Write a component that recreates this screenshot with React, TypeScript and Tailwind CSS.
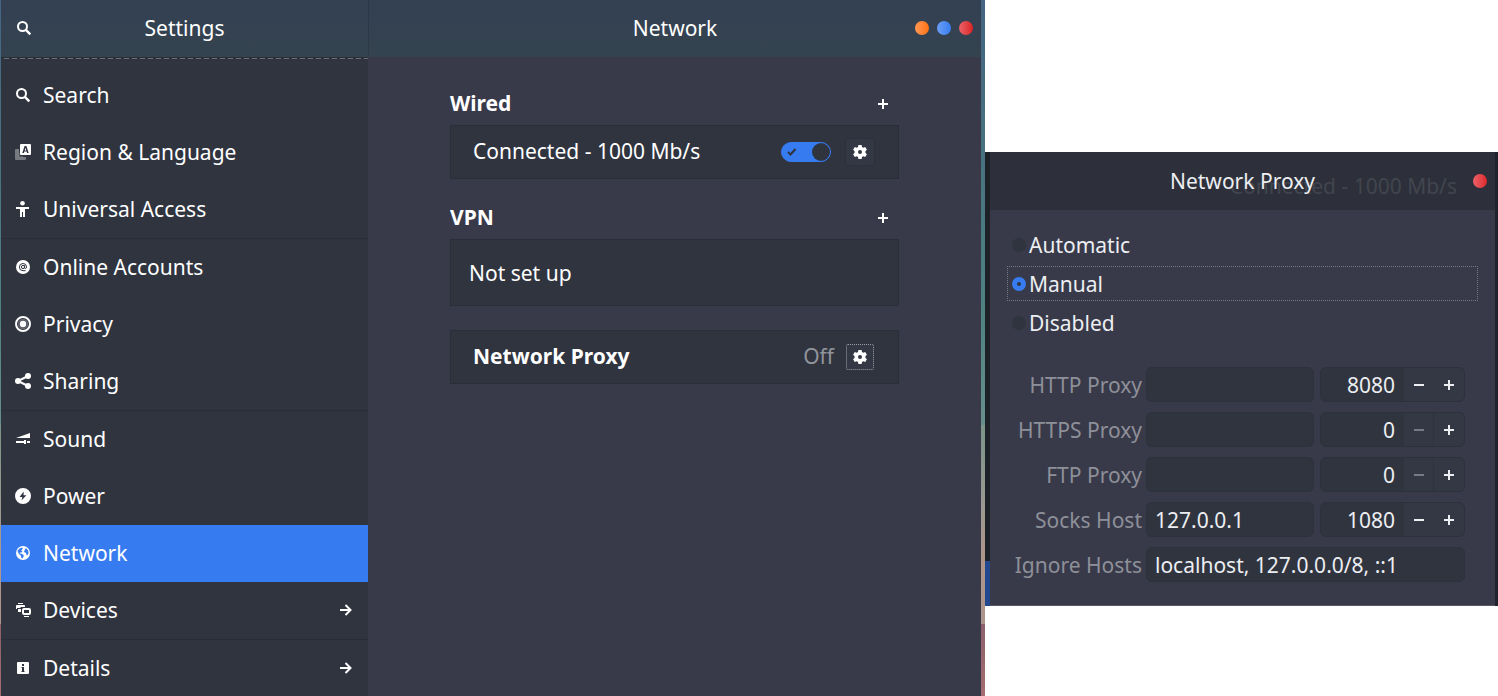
import { useState, type ReactNode } from "react";

function Icon({ children }: { children: ReactNode }) {
  return (
    <svg viewBox="0 0 16 16" className="size-4 shrink-0" fill="currentColor" aria-hidden="true">
      {children}
    </svg>
  );
}

const SearchIcon = () => (
  <Icon>
    <circle cx="6.5" cy="6.5" r="4.500" fill="none" stroke="currentColor" strokeWidth="2" />
    <path d="M9.6 9.6 14.300 14.300" stroke="currentColor" strokeWidth="2.4" />
  </Icon>
);

const RegionIcon = () => (
  <Icon>
    <path d="M1 5h3v8h7v2a1 1 0 0 1-1 1H1a1 1 0 0 1-1-1V6a1 1 0 0 1 1-1z" opacity=".35" />
    <path d="M4 9h1v3h3v1H4z" opacity=".2" />
    <path
      fillRule="evenodd"
      d="M6 0h9a1 1 0 0 1 1 1v9a1 1 0 0 1-1 1H6a1 1 0 0 1-1-1V1a1 1 0 0 1 1-1zm3.6 2L7.3 9h1.6l.4-1.4h2.4l.4 1.4h1.6l-2.3-7zm.9 1.7.8 2.7H9.7z"
    />
  </Icon>
);

const AccessIcon = () => (
  <Icon>
    <circle cx="7.5" cy="2.300" r="2.3" />
    <path d="M1 6h13v2h-4v8H8v-5H7v5H5V8H1z" />
  </Icon>
);

const AccountsIcon = () => (
  <Icon>
    <circle cx="8" cy="8" r="7" />
    <g fill="none" stroke="#30343f" strokeWidth="1">
      <circle cx="8" cy="8" r="1.6" />
      <path d="M9.6 6.2v2.6c0 1.2 2 1 2-.8a3.6 3.6 0 1 0-3.6 3.7h2.6" />
    </g>
  </Icon>
);

const PrivacyIcon = () => (
  <Icon>
    <circle cx="8" cy="8" r="7" fill="none" stroke="currentColor" strokeWidth="2" />
    <circle cx="8" cy="8" r="4.4" fill="none" stroke="currentColor" strokeWidth="1.6" opacity=".25" />
    <circle cx="8" cy="8" r="3.2" />
  </Icon>
);

const SharingIcon = () => (
  <Icon>
    <circle cx="3" cy="8" r="3" />
    <circle cx="13" cy="3" r="3" />
    <circle cx="13" cy="13" r="3" />
    <path d="M13 3 3 8l10 5" fill="none" stroke="currentColor" strokeWidth="2" />
  </Icon>
);

const SoundIcon = () => (
  <Icon>
    <path d="M1 7 15 2v5zM1 10h8V9h2v4H9v-1H1zM12 10h3v2h-3z" />
  </Icon>
);

const PowerIcon = () => (
  <Icon>
    <path
      fillRule="evenodd"
      d="M8 0a8 8 0 1 1 0 16A8 8 0 0 1 8 0zm.6 3.6L4.6 9H7.4l-.9 3.6L11.4 7.2H8.6z"
    />
  </Icon>
);

const NetworkIcon = () => (
  <Icon>
    <circle cx="8" cy="8" r="7" />
    <path
      fill="#367bf0"
      d="M2.600 5.600 4.500 3.600 7.200 2.600l.6 1.200-1.600 1.600 1.200.8L6.600 7.600 5 7.400l-.6.9 2 .5 2 .9.4 1.500-1.400 2.200-1.200-.7-.3-2.200-1.700-1.300-1.200-1.600zM9.600 3.800l1.800-.2 1.800 2 .4 2.600-1.200 2-1-.3-.3-1.900-1.700-.8-.5-1.400 1.300-.6z"
    />
  </Icon>
);

const DevicesIcon = () => (
  <Icon>
    <path d="M3 1h5v1H3zM1 4a1 1 0 0 1 1-1h7a1 1 0 0 1 1 1v1H6L5 6H2v1H1zM3 7h3v3H3z" />
    <rect x="8" y="7" width="7" height="5" rx="1" fill="none" stroke="currentColor" strokeWidth="2" />
    <path d="M9 14h5v1H9z" />
  </Icon>
);

const DetailsIcon = () => (
  <Icon>
    <path
      fillRule="evenodd"
      d="M3 2h10a1 1 0 0 1 1 1v10a1 1 0 0 1-1 1H3a1 1 0 0 1-1-1V3a1 1 0 0 1 1-1zm4 2v2h2V4zM6.500 7v1H7v3h-.5v1h3v-1H9V7z"
    />
  </Icon>
);

const ArrowIcon = () => (
  <Icon>
    <path d="M2 8h11M7.500 3l5 5-5 5" fill="none" stroke="currentColor" strokeWidth="2" />
  </Icon>
);

const GearIcon = () => (
  <Icon>
    <path
      fillRule="evenodd"
      d="M6.400 1h3.200l.4 2 1.200.7 2-.7 1.700 2.800-1.500 1.400v1.600l1.500 1.400-1.700 2.800-2-.7-1.200.7-.4 2H6.400L6 13l-1.200-.7-2 .7-1.700-2.800 1.500-1.400V7.200L1.100 5.800 2.800 3l2 .7L6 3zM8 6a2 2 0 1 0 0 4 2 2 0 0 0 0-4z"
    />
  </Icon>
);

const PlusIcon = () => (
  <Icon>
    <path d="M7 3h2v4h4v2H9v4H7V9H3V7h4z" />
  </Icon>
);

const MinusIcon = () => (
  <Icon>
    <path d="M3 7h10v2H3z" />
  </Icon>
);

type Item = { name: string; icon: () => ReactNode; more?: boolean };

const groups: Item[][] = [
  [
    { name: "Search", icon: SearchIcon },
    { name: "Region & Language", icon: RegionIcon },
    { name: "Universal Access", icon: AccessIcon },
  ],
  [
    { name: "Online Accounts", icon: AccountsIcon },
    { name: "Privacy", icon: PrivacyIcon },
    { name: "Sharing", icon: SharingIcon },
  ],
  [
    { name: "Sound", icon: SoundIcon },
    { name: "Power", icon: PowerIcon },
    { name: "Network", icon: NetworkIcon },
    { name: "Devices", icon: DevicesIcon, more: true },
  ],
  [{ name: "Details", icon: DetailsIcon, more: true }],
];

function Sidebar() {
  return (
    <aside className="flex w-[367px] shrink-0 flex-col bg-[#30343f]">
      <header className="grid h-[57px] grid-cols-[48px_1fr_48px] items-center bg-linear-to-b from-[#344053] to-[#34434f] pb-0.5">
        <button aria-label="Search settings" className="pl-[15px]">
          <SearchIcon />
        </button>
        <h1 className="text-center">Settings</h1>
      </header>
      <div className="mb-2 flex h-0.5 shrink-0 flex-col justify-end bg-[#292d36]">
        <div className="h-px bg-[repeating-linear-gradient(90deg,#30343f_0_3px,#6b6f77_3px_8px)]" />
      </div>
      <nav aria-label="Settings" className="divide-y divide-[#292d37]">
        {groups.map((group) => (
          <ul key={group[0].name}>
            {group.map(({ name, icon: Glyph, more }) => (
              <li key={name}>
                <a
                  href={"#" + name.toLowerCase().replaceAll(" ", "-")}
                  aria-current={name === "Network" ? "page" : undefined}
                  className="flex h-[57px] items-center gap-3 px-3.5 pb-0.5 aria-[current=page]:bg-[#367bf0]"
                >
                  <Glyph />
                  <span className="flex-1">{name}</span>
                  {more && <ArrowIcon />}
                </a>
              </li>
            ))}
          </ul>
        ))}
      </nav>
    </aside>
  );
}

const card = "flex items-center border border-[#2a2e38] bg-[#30343f]";

function NetworkPanel() {
  const [wired, setWired] = useState(true);
  return (
    <main className="flex min-w-0 flex-1 flex-col bg-[#383a4a]">
      <header className="grid h-[57px] grid-cols-[80px_1fr_72px] items-center border-l border-[#2c3845] bg-linear-to-b from-[#344053] to-[#34434f] pr-2 pb-0.5">
        <h2 className="col-start-2 text-center">Network</h2>
        <div className="flex justify-end gap-2">
          <button aria-label="Minimize" className="size-3.5 rounded-full bg-linear-to-r from-[#ff9850] to-[#ff7107]" />
          <button aria-label="Maximize" className="size-3.5 rounded-full bg-linear-to-r from-[#6a9ff5] to-[#377cf1]" />
          <button aria-label="Close" className="size-3.5 rounded-full bg-linear-to-r from-[#ec6068] to-[#d91e22]" />
        </div>
      </header>
      <div className="mx-auto flex w-full max-w-[449px] flex-col pt-[25px]">
        <section>
          <div className="flex h-[43px] items-center justify-between pr-2">
            <h3 className="pb-0.5 font-bold">Wired</h3>
            <button aria-label="Add wired connection">
              <PlusIcon />
            </button>
          </div>
          <div className={card + " h-[54px] gap-3.5 pr-[23px] pl-[22px]"}>
            <label htmlFor="wired" className="flex-1 pb-0.5">
              Connected - 1000 Mb/s
            </label>
            <span className="relative flex">
              <input
                id="wired"
                type="checkbox"
                role="switch"
                checked={wired}
                onChange={(e) => setWired(e.target.checked)}
                className="flex h-5 w-[50px] appearance-none rounded-full border border-[#367bf0] bg-[#30343f] before:size-[18px] before:rounded-full before:bg-[#30343f] checked:justify-end checked:bg-[#367bf0]"
              />
              <svg viewBox="0 0 10 8" className="pointer-events-none absolute top-1.5 left-1.5 h-2 w-2.5" aria-hidden="true">
                <path d="M1 4l2.500 2.500L8.500 1" fill="none" stroke="#30343f" strokeWidth="2" />
              </svg>
            </span>
            <button
              aria-label="Wired options"
              className="flex h-7 w-[30px] items-center justify-center rounded border border-[#2c303a] bg-[#343845]"
            >
              <GearIcon />
            </button>
          </div>
        </section>
        <section className="mt-[17px]">
          <div className="flex h-[43px] items-center justify-between pr-2">
            <h3 className="pb-0.5 font-bold">VPN</h3>
            <button aria-label="Add VPN">
              <PlusIcon />
            </button>
          </div>
          <div className={card + " h-[67px] px-[18px]"}>Not set up</div>
        </section>
        <section className={card + " mt-6 h-[54px] gap-3 pr-6 pl-[22px]"}>
          <h3 className="flex-1 pb-0.5 font-bold">Network Proxy</h3>
          <span className="pb-0.5 text-[#91949c]">Off</span>
          <button
            aria-label="Proxy options"
            className="flex h-[26px] w-7 items-center justify-center rounded-xs border border-dotted border-[#9a9da4] bg-[#343845]"
          >
            <GearIcon />
          </button>
        </section>
      </div>
    </main>
  );
}

const hosts = [
  { label: "HTTP Proxy", host: "", port: 8080 },
  { label: "HTTPS Proxy", host: "", port: 0 },
  { label: "FTP Proxy", host: "", port: 0 },
  { label: "Socks Host", host: "127.0.0.1", port: 1080 },
];

const field = "h-[35px] min-w-0 rounded-md border border-[#2d313b] bg-[#30343f] px-2";

function ProxyRow({ label, host, port }: (typeof hosts)[number]) {
  const [value, setValue] = useState(port);
  const id = label.toLowerCase().replace(" ", "-");
  return (
    <>
      <label htmlFor={id} className="text-right text-[#8e9099]">
        {label}
      </label>
      <input id={id} defaultValue={host} className={field + " mr-0.5"} />
      <div className="flex h-[35px] overflow-hidden rounded-md border border-[#2d313b] bg-[#343845]">
        <input
          aria-label={label + " port"}
          inputMode="numeric"
          value={value}
          onChange={(e) => setValue(Number(e.target.value) || 0)}
          className="min-w-0 flex-1 border-r border-[#2f333e] bg-[#30343f] pr-2 text-right"
        />
        <button
          aria-label={"Decrease " + label + " port"}
          disabled={value === 0}
          onClick={() => setValue(value - 1)}
          type="button"
          className="flex w-[30px] items-center justify-center border-r border-transparent disabled:border-[#2f333e] disabled:text-[#777a84]"
        >
          <MinusIcon />
        </button>
        <button
          aria-label={"Increase " + label + " port"}
          onClick={() => setValue(value + 1)}
          type="button"
          className="flex w-[30px] items-center justify-center"
        >
          <PlusIcon />
        </button>
      </div>
    </>
  );
}

function ProxyDialog() {
  const [mode, setMode] = useState("Manual");
  return (
    <section
      role="dialog"
      aria-label="Network Proxy"
      className="mt-[152px] flex w-[513px] shrink-0 self-start text-[#eceef2]"
    >
      <div className="flex w-[5px] flex-col justify-end bg-[#1d2128]">
        <div className="h-[45px] bg-[#22498f]" />
      </div>
      <div className="min-w-0 flex-1 border-b border-[#565967] bg-[#383a4a]">
        <header className="relative grid h-[58px] grid-cols-[40px_1fr_32px] items-center bg-[#2d303a] pr-2">
          <span aria-hidden="true" className="absolute top-5 right-[38px] text-[#41454e]">
            Connected - 1000 Mb/s
          </span>
          <h2 className="relative col-start-2 text-center">Network Proxy</h2>
          <button
            aria-label="Close"
            className="size-3.5 justify-self-end rounded-full bg-linear-to-r from-[#ec6068] to-[#dc2529]"
          />
        </header>
        <form className="px-[17px] pt-[17px] pb-[23px]">
          <fieldset className="flex flex-col gap-1">
            {["Automatic", "Manual", "Disabled"].map((m) => (
              <label
                key={m}
                className="flex h-[35px] items-center gap-[3px] border border-transparent px-1 has-checked:border-dotted has-checked:border-[#757884]"
              >
                <input
                  type="radio"
                  name="mode"
                  checked={mode === m}
                  onChange={() => setMode(m)}
                  className="size-3.5 appearance-none rounded-full bg-[#30343f] checked:border-5 checked:border-[#367bf0]"
                />
                {m}
              </label>
            ))}
          </fieldset>
          <div className="mt-[27px] grid grid-cols-[135px_170px_1fr] items-center gap-x-1 gap-y-2.5 pr-[13px]">
            {hosts.map((h) => (
              <ProxyRow key={h.label} {...h} />
            ))}
            <label htmlFor="ignore-hosts" className="text-right text-[#8e9099]">
              Ignore Hosts
            </label>
            <input
              id="ignore-hosts"
              defaultValue="localhost, 127.0.0.0/8, ::1"
              className={field + " col-span-2"}
            />
          </div>
        </form>
      </div>
      <div className="w-[3px] bg-[#20232b]" />
    </section>
  );
}

const edge =
  "shrink-0 bg-[linear-gradient(#446583,#477280_22%,#508282_45%,#66908a_61%,#7c9489_61%,#9b9a90_73%,#b0958a_80%,#ac958b_89.500%,#8c606b_89.500%,#a46e72)]";

export default function App() {
  return (
    <div className="flex min-h-screen bg-white font-['Noto_Sans','Open_Sans',sans-serif] text-[21px] leading-7 text-white">
      <div className="flex min-w-0 flex-1 border-b border-[#2a2d38]">
        <div className={edge + " w-px"} />
        <Sidebar />
        <NetworkPanel />
        <div className={edge + " w-1"} />
      </div>
      <ProxyDialog />
    </div>
  );
}
